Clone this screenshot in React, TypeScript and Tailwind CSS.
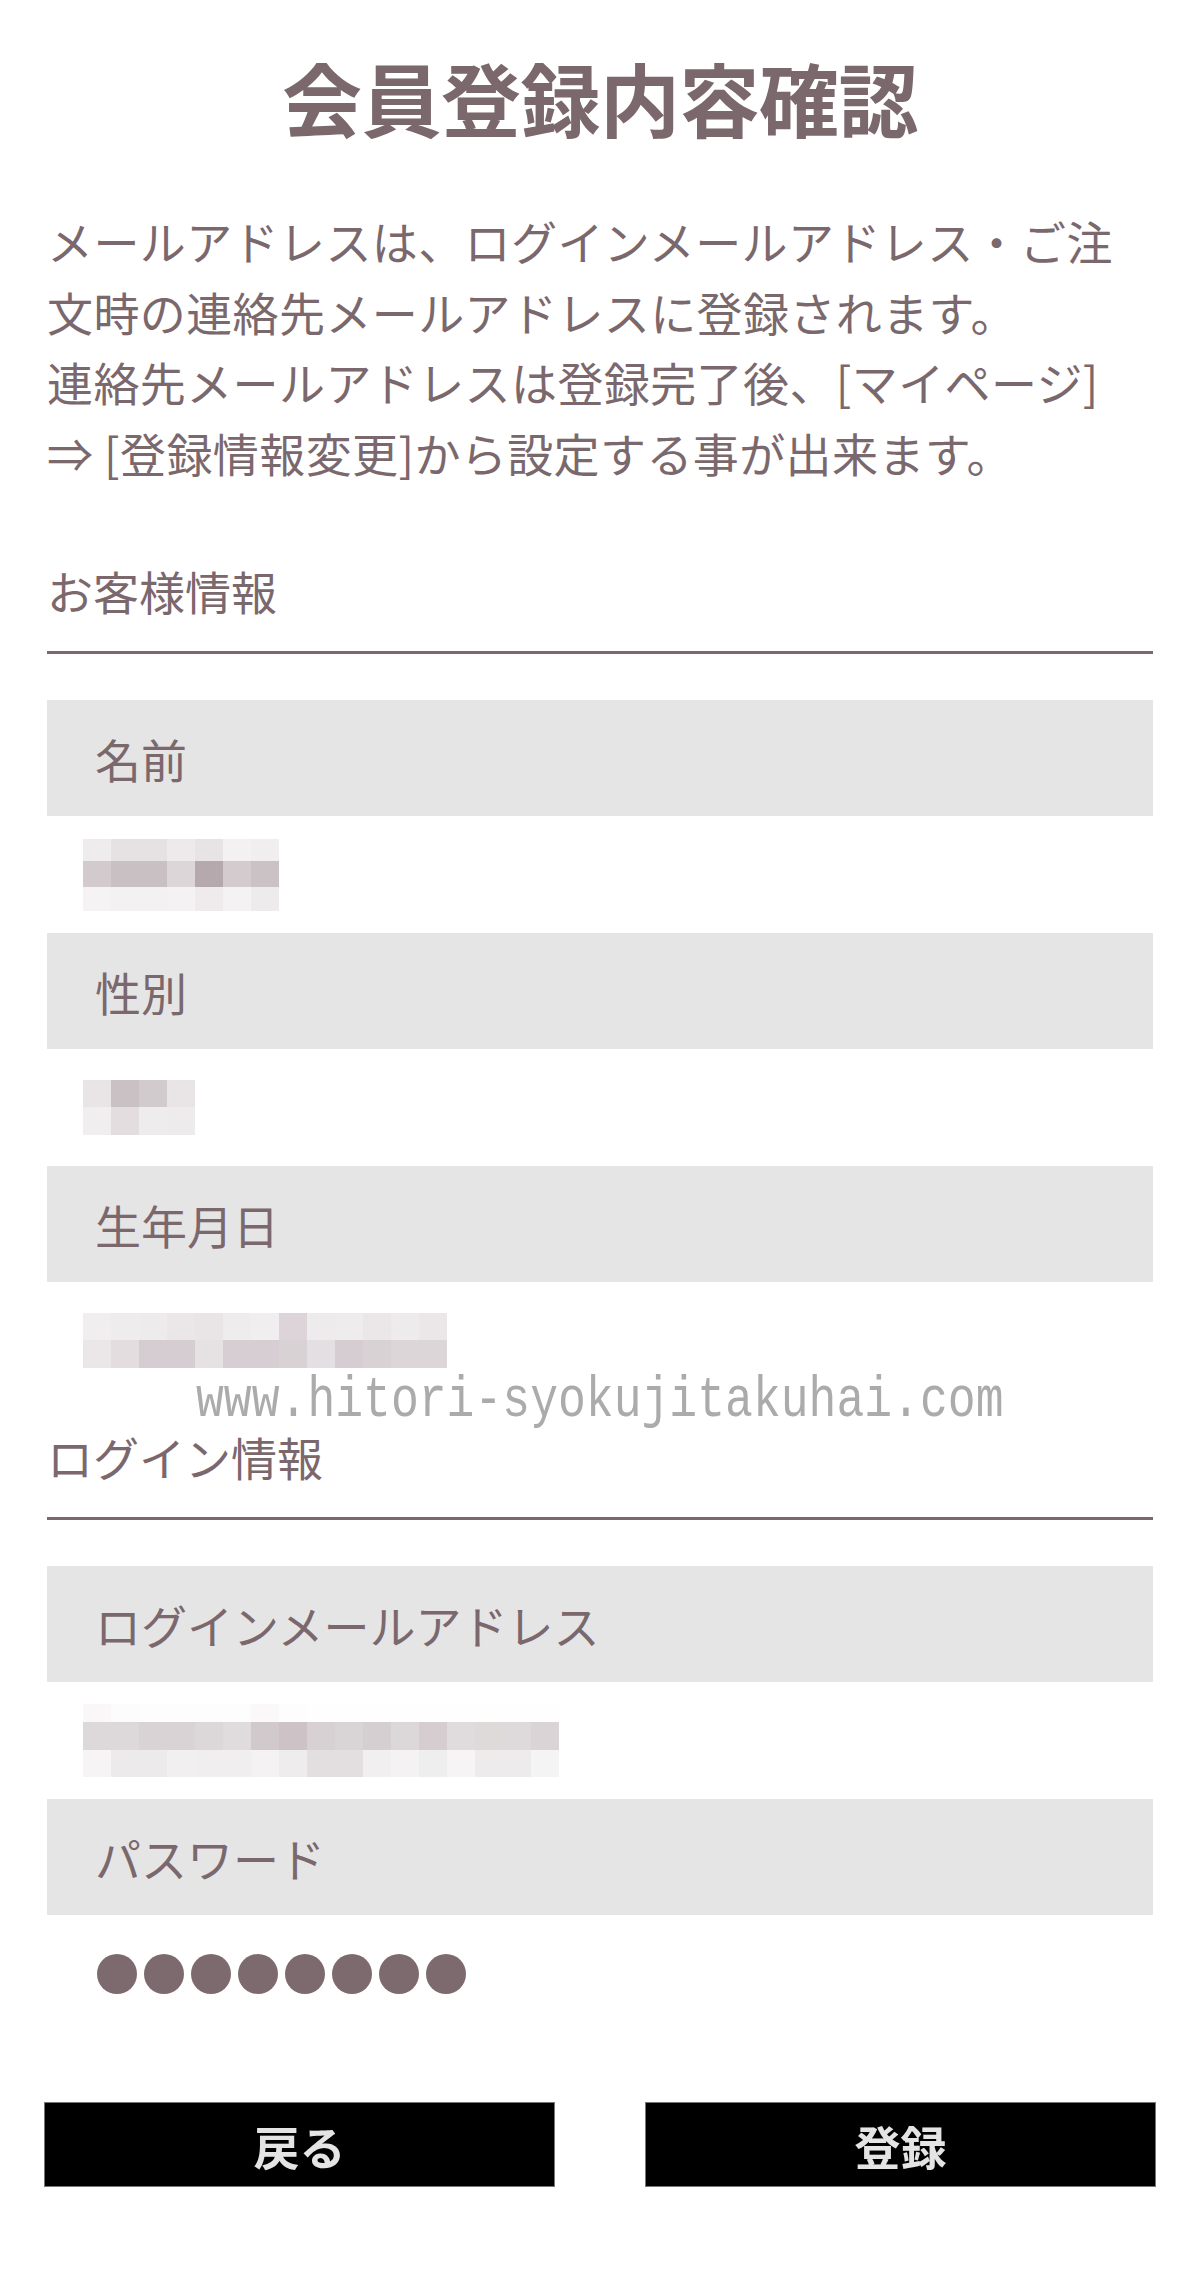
import React from "react";

type MosaicProps = { rows: string[][]; heights: number[] };

function Mosaic({ rows, heights }: MosaicProps) {
  return (
    <div className="flex flex-col">
      {rows.map((row, ri) => (
        <div key={ri} className="flex" style={{ height: heights[ri] }}>
          {row.map((c, ci) => (
            <div key={ci} className="w-[28px] h-full" style={{ backgroundColor: c }} />
          ))}
        </div>
      ))}
    </div>
  );
}

const v1 = [
  ["#efeced", "#e6e2e4", "#e6e2e4", "#eeeaeb", "#e8e4e6", "#f3f1f2", "#f1eef0"],
  ["#d2cacd", "#c9c0c4", "#c9c0c4", "#dcd6d8", "#b6a9ae", "#d3cbce", "#cbc2c5"],
  ["#f5f3f4", "#f3f1f2", "#f3f1f2", "#f4f2f3", "#efebec", "#f4f2f3", "#eeebec"],
];
const v2 = [
  ["#e9e5e7", "#cac1c5", "#d2cbce", "#e9e5e7"],
  ["#f1eef0", "#e3dde0", "#efecee", "#eeebed"],
];
const v3 = [
  ["#f1eef0", "#efecee", "#eeebed", "#ebe7e9", "#e9e5e7", "#efecee", "#f1eef0", "#dcd4d8", "#eeebed", "#efecee", "#ebe7e9", "#eeebed", "#ebe7e9"],
  ["#ebe7e9", "#e3dde0", "#d5cdd1", "#d5cdd1", "#e6e1e3", "#d6ced2", "#d6ced2", "#d9d2d5", "#e4dfe2", "#d5cdd1", "#d9d2d5", "#dcd6d9", "#dcd6d9"],
];
const v4 = [
  ["#faf7f8", "#fdfcfc", "#fdfdfd", "#fdfdfd", "#fdfdfd", "#fdfdfd", "#faf8f8", "#fdfdfd", "#fefefe", "#fefefe", "#fefefe", "#fefefe", "#fefefe", "#fefefe", "#fefefe", "#fefefe", "#fefefe"],
  ["#ddd8da", "#ddd8da", "#d9d3d6", "#d9d3d6", "#dcd7d9", "#e0dcdd", "#d2c9cd", "#cdc3c7", "#d8d1d4", "#d9d5d7", "#d6cfd2", "#dcd8da", "#d6cdd1", "#e0dcdd", "#dedada", "#dedadb", "#dbd4d7"],
  ["#f6f4f5", "#eceaeb", "#eceaeb", "#f1eff0", "#f0eeef", "#f1eeef", "#f4f2f3", "#efecee", "#e3dfe1", "#e3dfe1", "#f2eff0", "#f4f2f3", "#efeeef", "#f6f4f5", "#eeebec", "#eeebec", "#f5f4f4"],
];

function FieldLabel({ children }: { children: React.ReactNode }) {
  return (
    <div className="h-[116px] bg-[#e5e5e5] flex items-center pl-[48px] text-[46px] leading-none">
      {children}
    </div>
  );
}

function FieldValue({ children }: { children: React.ReactNode }) {
  return <div className="h-[117px] flex items-center pl-[36px]">{children}</div>;
}

function SectionHeading({ children, className }: { children: React.ReactNode; className: string }) {
  return (
    <div className={`border-b-[3px] border-[#7b686d] pb-[26px] ${className}`}>
      <div className="h-[70px] flex items-center text-[46px] leading-none">{children}</div>
    </div>
  );
}

export default function App() {
  return (
    <div className="relative w-[1200px] min-h-[2283px] bg-white text-[#7b686d] font-['Noto_Sans_CJK_JP','Noto_Sans',sans-serif]">
      <div className="px-[47px]">
        <div className="h-[192px] flex items-center justify-center">
          <h1 className="text-[80px] font-bold leading-none tracking-[-0.5px]">会員登録内容確認</h1>
        </div>
        <div className="mt-[13px] text-[46px] leading-[70.5px] tracking-[0.4px] whitespace-nowrap">
          <div>メールアドレスは、ログインメールアドレス・ご注</div>
          <div>文時の連絡先メールアドレスに登録されます。</div>
          <div>連絡先メールアドレスは登録完了後、[マイページ]</div>
          <div>⇒ [登録情報変更]から設定する事が出来ます。</div>
        </div>

        <SectionHeading className="mt-[68px]">お客様情報</SectionHeading>
        <div className="mt-[46px]">
          <FieldLabel>名前</FieldLabel>
          <FieldValue>
            <Mosaic rows={v1} heights={[22, 26, 24]} />
          </FieldValue>
          <FieldLabel>性別</FieldLabel>
          <FieldValue>
            <Mosaic rows={v2} heights={[27, 28]} />
          </FieldValue>
          <FieldLabel>生年月日</FieldLabel>
          <FieldValue>
            <Mosaic rows={v3} heights={[27, 28]} />
          </FieldValue>
        </div>

        <SectionHeading className="mt-[22px]">ログイン情報</SectionHeading>
        <div className="mt-[46px]">
          <FieldLabel>ログインメールアドレス</FieldLabel>
          <FieldValue>
            <Mosaic rows={v4} heights={[18, 28, 27]} />
          </FieldValue>
          <FieldLabel>パスワード</FieldLabel>
          <FieldValue>
            <div className="flex gap-[7px] ml-[14px]">
              {Array.from({ length: 8 }).map((_, i) => (
                <div key={i} className="w-[40px] h-[40px] rounded-full bg-[#7d6a6f]" />
              ))}
            </div>
          </FieldValue>
        </div>
      </div>

      <div className="mt-[70px] px-[44px] flex justify-between">
        <button className="w-[511px] h-[85px] bg-black border border-[#777] flex items-center justify-center text-[46px] font-bold leading-none text-[#e4e4e4] blur-[0.5px]">
          戻る
        </button>
        <button className="w-[511px] h-[85px] bg-black border border-[#777] flex items-center justify-center text-[46px] font-bold leading-none text-[#e4e4e4] blur-[0.5px]">
          登録
        </button>
      </div>

      <div className="absolute left-[196px] top-[1372px] origin-left scale-x-[0.8] font-['Liberation_Mono',monospace] text-[58px] leading-none text-[#ababab] whitespace-nowrap pointer-events-none">
        www.hitori-syokujitakuhai.com
      </div>
    </div>
  );
}
